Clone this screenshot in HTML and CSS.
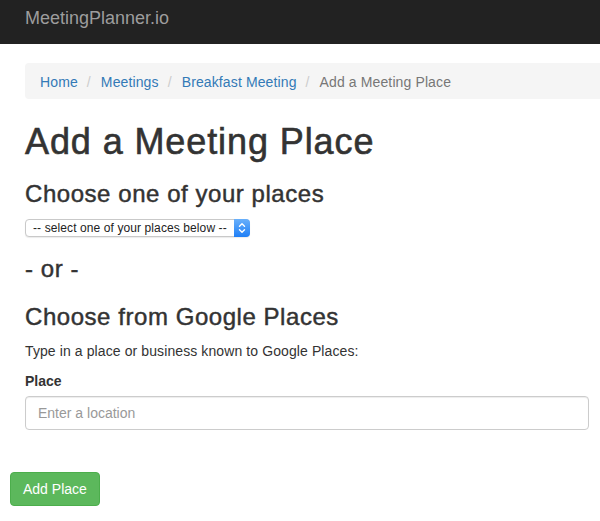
FILE: index.html
```html
<!DOCTYPE html>
<html lang="en">
<head>
<meta charset="utf-8">
<title>Add a Meeting Place</title>
<link rel="stylesheet" href="styles.css">
</head>
<body>
<nav class="navbar">
  <a class="brand" href="#">MeetingPlanner.io</a>
</nav>
<main class="page">
  <ol class="breadcrumb">
    <li><a href="#">Home</a></li>
    <li><a href="#">Meetings</a></li>
    <li><a href="#">Breakfast Meeting</a></li>
    <li class="active">Add a Meeting Place</li>
  </ol>
  <h1 class="title">Add a Meeting Place</h1>
  <h3 class="subhead first">Choose one of your places</h3>
  <div class="select-wrap">
    <select class="place-select">
      <option>-- select one of your places below --</option>
    </select>
    <span class="stepper">
      <svg width="16" height="18" viewBox="0 0 16 18">
        <path d="M5.5 7.2 L8 4.8 L10.5 7.2" fill="none" stroke="#fff" stroke-width="1.4" stroke-linecap="round" stroke-linejoin="round"/>
        <path d="M5.5 10.8 L8 13.2 L10.5 10.8" fill="none" stroke="#fff" stroke-width="1.4" stroke-linecap="round" stroke-linejoin="round"/>
      </svg>
    </span>
  </div>
  <h3 class="subhead or">- or -</h3>
  <h3 class="subhead google">Choose from Google Places</h3>
  <p class="hint">Type in a place or business known to Google Places:</p>
  <div class="form-group">
    <label class="field-label" for="place">Place</label>
    <input class="field-input" id="place" type="text" placeholder="Enter a location">
  </div>
  <button class="btn-success" type="button">Add Place</button>
</main>
</body>
</html>
```
FILE: styles.css
```css
html, body {
  margin: 0;
  padding: 0;
  background: #fff;
  overflow: hidden;
}
body {
  font-family: "Liberation Sans", Arial, sans-serif;
  font-size: 14px;
  line-height: 20px;
  color: #333;
}
.navbar {
  height: 44px;
  background: #222;
  padding: 0 25px;
  box-sizing: border-box;
}
.brand {
  display: inline-block;
  padding-top: 8px;
  font-size: 18px;
  line-height: 20px;
  color: #9d9d9d;
  text-decoration: none;
}
.page {
  padding: 0 11px 0 25px;
  display: flex;
  flex-direction: column;
  align-items: stretch;
}
.breadcrumb {
  list-style: none;
  margin: 19px -11px 0 0;
  padding: 9px 15px 7px;
  background: #f5f5f5;
  border-radius: 4px 0 0 4px;
  line-height: 20px;
  letter-spacing: 0.12px;
  display: flex;
  gap: 0;
}
.breadcrumb li + li::before {
  content: "/\00a0";
  padding: 0 6px 0 9px;
  color: #ccc;
}
.breadcrumb a {
  color: #337ab7;
  text-decoration: none;
}
.breadcrumb .active {
  color: #777;
}
.title {
  margin: 23px 0 0;
  font-size: 36px;
  line-height: 1.1;
  font-weight: 500;
  letter-spacing: 0.9px;
  -webkit-text-stroke: 0.6px #333;
  color: #333;
}
.subhead {
  margin: 0;
  font-size: 24px;
  line-height: 1.1;
  font-weight: 500;
  letter-spacing: 0.55px;
  -webkit-text-stroke: 0.45px #333;
  color: #333;
}
.subhead.first { margin-top: 19px; }
.subhead.or { margin-top: 19px; }
.subhead.google { margin-top: 22px; }
.select-wrap {
  margin-top: 12px;
  align-self: flex-start;
  width: 225px;
  height: 18px;
  box-sizing: border-box;
  display: flex;
  align-items: stretch;
  border: 1px solid #c9c9c9;
  border-radius: 4px;
  background: #fff;
  box-shadow: 0 1px 1px rgba(0,0,0,0.08);
}
.place-select {
  flex: 1;
  min-width: 0;
  -webkit-appearance: none;
  appearance: none;
  border: none;
  background: transparent;
  font-family: "Liberation Sans", Arial, sans-serif;
  font-size: 12px;
  letter-spacing: 0.1px;
  color: #222;
  padding: 0 0 0 7px;
  margin: 0;
  height: 16px;
  line-height: 16px;
  outline: none;
}
.stepper {
  width: 16px;
  margin: -1px -1px -1px 0;
  border-radius: 0 4px 4px 0;
  background: linear-gradient(#69b0fb, #1f7ff6);
  display: flex;
  align-items: center;
  justify-content: center;
}
.stepper svg { display: block; }
.hint {
  margin: 10px 0 0;
  letter-spacing: 0.1px;
}
.form-group {
  margin-top: 10px;
  display: flex;
  flex-direction: column;
}
.field-label {
  font-weight: 700;
  margin-bottom: 5px;
}
.field-input {
  height: 34px;
  box-sizing: border-box;
  padding: 6px 12px;
  font-family: "Liberation Sans", Arial, sans-serif;
  font-size: 14px;
  line-height: 20px;
  color: #555;
  border: 1px solid #ccc;
  border-radius: 4px;
  box-shadow: inset 0 1px 1px rgba(0,0,0,0.075);
  background: #fff;
  outline: none;
}
.field-input::placeholder {
  color: #999;
}
.btn-success {
  align-self: flex-start;
  margin: 42px 0 0 -15px;
  height: 34px;
  padding: 6px 12px;
  box-sizing: border-box;
  font-family: "Liberation Sans", Arial, sans-serif;
  font-size: 14px;
  line-height: 20px;
  color: #fff;
  background: #5cb85c;
  border: 1px solid #4cae4c;
  border-radius: 4px;
  cursor: pointer;
}
```
